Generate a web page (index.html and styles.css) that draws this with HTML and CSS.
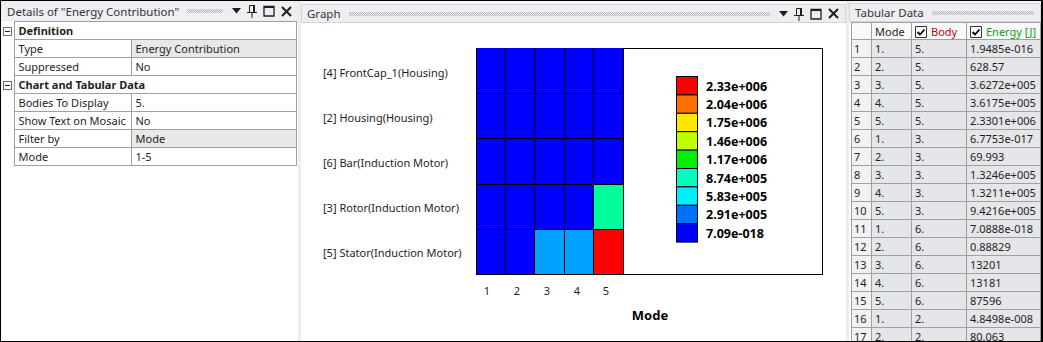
FILE: index.html
```html
<!DOCTYPE html>
<html lang="en">
<head>
  <meta charset="UTF-8">
  <title>Energy Contribution</title>
  <link rel="stylesheet" href="styles.css">
</head>
<body>
  <div class="frame">
    <!-- details pane -->
    <section class="panel details">
      <header class="panel-head">
        <span class="title">Details of "Energy Contribution"</span>
        <span class="grip"></span>
        <span class="head-icons">
          <svg width="9" height="6" viewBox="0 0 9 6"><path d="M0 0h9L4.5 5.5z" fill="#1e1e1e"/></svg>
          <svg width="10" height="14" viewBox="0 0 10 14"><path d="M2.5 1.5h5v7h-5z M0 8.5h10 M5 9v5" stroke="#1e1e1e" fill="none"/><path d="M6 1h2v8H6z" fill="#1e1e1e"/></svg>
          <svg width="12" height="12" viewBox="0 0 12 12"><path d="M1 1.5h10v9.5H1z" stroke="#1e1e1e" stroke-width="1.3" fill="none"/><path d="M1 1h10v2H1z" fill="#1e1e1e"/></svg>
          <svg width="11" height="11" viewBox="0 0 11 11"><path d="M1 1l9 9M10 1l-9 9" stroke="#1e1e1e" stroke-width="2"/></svg>
        </span>
      </header>
      <table class="props">
        <colgroup><col class="c-gutter"><col class="c-label"><col class="c-value"></colgroup>
        <tr class="group"><td class="gutter"><span class="minus"></span></td><td colspan="2">Definition</td></tr>
        <tr><td class="gutter"></td><td>Type</td><td class="ro">Energy Contribution</td></tr>
        <tr><td class="gutter"></td><td>Suppressed</td><td>No</td></tr>
        <tr class="group"><td class="gutter"><span class="minus"></span></td><td colspan="2">Chart and Tabular Data</td></tr>
        <tr><td class="gutter"></td><td>Bodies To Display</td><td>5.</td></tr>
        <tr><td class="gutter"></td><td>Show Text on Mosaic</td><td>No</td></tr>
        <tr><td class="gutter"></td><td>Filter by</td><td class="ro">Mode</td></tr>
        <tr><td class="gutter"></td><td>Mode</td><td>1-5</td></tr>
      </table>
    </section>

    <!-- graph pane -->
    <section class="panel graph">
      <header class="panel-head">
        <span class="title">Graph</span>
        <span class="grip"></span>
        <span class="head-icons">
          <svg width="9" height="6" viewBox="0 0 9 6"><path d="M0 0h9L4.5 5.5z" fill="#1e1e1e"/></svg>
          <svg width="10" height="14" viewBox="0 0 10 14"><path d="M2.5 1.5h5v7h-5z M0 8.5h10 M5 9v5" stroke="#1e1e1e" fill="none"/><path d="M6 1h2v8H6z" fill="#1e1e1e"/></svg>
          <svg width="12" height="12" viewBox="0 0 12 12"><path d="M1 1.5h10v9.5H1z" stroke="#1e1e1e" stroke-width="1.3" fill="none"/><path d="M1 1h10v2H1z" fill="#1e1e1e"/></svg>
          <svg width="11" height="11" viewBox="0 0 11 11"><path d="M1 1l9 9M10 1l-9 9" stroke="#1e1e1e" stroke-width="2"/></svg>
        </span>
      </header>
      <div class="graph-body">
        <svg class="chart" width="545" height="317" viewBox="301 23 545 317">
          <g class="bodies">
            <text x="323" y="77">[4] FrontCap_1(Housing)</text>
            <text x="323" y="122">[2] Housing(Housing)</text>
            <text x="323" y="167">[6] Bar(Induction Motor)</text>
            <text x="323" y="212">[3] Rotor(Induction Motor)</text>
            <text x="323" y="257">[5] Stator(Induction Motor)</text>
          </g>
          <rect x="476.5" y="48.5" width="346" height="226" fill="#fff" stroke="#000"/>
          <!-- mosaic -->
          <rect x="476" y="48" width="147" height="181" fill="#0000ff"/>
          <rect x="594" y="184" width="29" height="45" fill="#00ff9c"/>
          <rect x="476" y="229" width="58" height="45" fill="#0000ff"/>
          <rect x="534" y="229" width="59" height="45" fill="#00a2ff"/>
          <rect x="593" y="229" width="30" height="45" fill="#ff0000"/>
          <g stroke="#000" stroke-width="1">
            <path d="M476 93.5h147M476 138.5h147M476 184.5h147M476 229.5h147M476 274.5h147"/>
            <path d="M476.5 48v227M505.5 48v227M534.5 48v227M564.5 48v227M593.5 48v227M623.5 48v227"/>
          </g>
          <!-- legend -->
          <g stroke="#000" stroke-width="1">
            <rect x="676.5" y="76.5" width="21" height="18.4" fill="#ff0000"/>
            <rect x="676.5" y="94.9" width="21" height="18.4" fill="#ff7000"/>
            <rect x="676.5" y="113.3" width="21" height="18.4" fill="#ffe600"/>
            <rect x="676.5" y="131.7" width="21" height="18.4" fill="#c0ff00"/>
            <rect x="676.5" y="150.1" width="21" height="18.4" fill="#00ee00"/>
            <rect x="676.5" y="168.5" width="21" height="18.4" fill="#00ffbf"/>
            <rect x="676.5" y="186.9" width="21" height="18.4" fill="#00eeff"/>
            <rect x="676.5" y="205.3" width="21" height="18.4" fill="#0070ff"/>
            <rect x="676.5" y="223.7" width="21" height="18.4" fill="#0000ff"/>
          </g>
          <g class="legend">
            <text x="706" y="90.5">2.33e+006</text>
            <text x="706" y="108.9">2.04e+006</text>
            <text x="706" y="127.3">1.75e+006</text>
            <text x="706" y="145.7">1.46e+006</text>
            <text x="706" y="164.1">1.17e+006</text>
            <text x="706" y="182.5">8.74e+005</text>
            <text x="706" y="200.9">5.83e+005</text>
            <text x="706" y="219.3">2.91e+005</text>
            <text x="706" y="237.7">7.09e-018</text>
          </g>
          <g class="ticks">
            <text x="487" y="295">1</text>
            <text x="517" y="295">2</text>
            <text x="547" y="295">3</text>
            <text x="577" y="295">4</text>
            <text x="606" y="295">5</text>
          </g>
          <text class="axis" x="650" y="320">Mode</text>
        </svg>
      </div>
    </section>

    <!-- tabular pane -->
    <section class="panel tabular">
      <header class="panel-head">
        <span class="title">Tabular Data</span>
        <span class="grip"></span>
      </header>
      <div class="tab-body">
        <table class="grid">
          <colgroup><col class="c-num"><col class="c-mode"><col class="c-body"><col class="c-energy"></colgroup>
          <tr class="head">
            <td class="num"></td>
            <td>Mode</td>
            <td><span class="check"><svg width="12" height="12" viewBox="0 0 12 12"><path d="M0.5 0.5h11v11h-11z" fill="#fff" stroke="#333"/><path d="M2.5 6l2.5 2.5 4.5-5" stroke="#000" stroke-width="1.8" fill="none"/></svg></span><span class="body-col">Body</span></td>
            <td><span class="check"><svg width="12" height="12" viewBox="0 0 12 12"><path d="M0.5 0.5h11v11h-11z" fill="#fff" stroke="#333"/><path d="M2.5 6l2.5 2.5 4.5-5" stroke="#000" stroke-width="1.8" fill="none"/></svg></span><span class="energy-col">Energy [J]</span></td>
          </tr>
          <tr><td class="num">1</td><td>1.</td><td>5.</td><td>1.9485e-016</td></tr>
          <tr><td class="num">2</td><td>2.</td><td>5.</td><td>628.57</td></tr>
          <tr><td class="num">3</td><td>3.</td><td>5.</td><td>3.6272e+005</td></tr>
          <tr><td class="num">4</td><td>4.</td><td>5.</td><td>3.6175e+005</td></tr>
          <tr><td class="num">5</td><td>5.</td><td>5.</td><td>2.3301e+006</td></tr>
          <tr><td class="num">6</td><td>1.</td><td>3.</td><td>6.7753e-017</td></tr>
          <tr><td class="num">7</td><td>2.</td><td>3.</td><td>69.993</td></tr>
          <tr><td class="num">8</td><td>3.</td><td>3.</td><td>1.3246e+005</td></tr>
          <tr><td class="num">9</td><td>4.</td><td>3.</td><td>1.3211e+005</td></tr>
          <tr><td class="num">10</td><td>5.</td><td>3.</td><td>9.4216e+005</td></tr>
          <tr><td class="num">11</td><td>1.</td><td>6.</td><td>7.0888e-018</td></tr>
          <tr><td class="num">12</td><td>2.</td><td>6.</td><td>0.88829</td></tr>
          <tr><td class="num">13</td><td>3.</td><td>6.</td><td>13201</td></tr>
          <tr><td class="num">14</td><td>4.</td><td>6.</td><td>13181</td></tr>
          <tr><td class="num">15</td><td>5.</td><td>6.</td><td>87596</td></tr>
          <tr><td class="num">16</td><td>1.</td><td>2.</td><td>4.8498e-008</td></tr>
          <tr><td class="num">17</td><td>2.</td><td>2.</td><td>80.063</td></tr>
          <tr><td class="num">18</td><td>3.</td><td>2.</td><td>85807</td></tr>
        </table>
      </div>
    </section>
  </div>
</body>
</html>
```

FILE: styles.css
```css
* { box-sizing: border-box; }
body {
  margin: 0;
  font-family: "Segoe UI", "Noto Sans", sans-serif;
  font-size: 11px;
  color: #1e1e1e;
  background: #fff;
}
.frame {
  width: 1043px;
  height: 342px;
  display: flex;
  gap: 3px;
  border: solid #000;
  border-width: 1px 2px 1px 1px;
  background: #ececec;
  overflow: hidden;
}
.panel {
  display: flex;
  flex-direction: column;
  min-width: 0;
}
.details {
  width: 297px;
  background: #fff;
}
.graph {
  width: 545px;
  padding-top: 3px;
  background: #f6f6f6;
}
.tabular {
  flex: 1;
  padding-top: 2px;
  background: #f6f6f6;
}
.panel-head {
  display: flex;
  align-items: center;
  gap: 5px;
  height: 19px;
  flex: none;
  padding: 0 6px 0 5px;
  background: #eeeef2;
  border: 1px solid #d4d5dc;
}
.details .panel-head {
  height: 20px;
  border: none;
  padding-left: 6px;
}
.panel-head .title {
  font-size: 11.5px;
  color: #333;
  white-space: nowrap;
}
.grip {
  flex: 1;
  height: 4px;
  margin-left: 3px;
  background: repeating-conic-gradient(#b4b4bc 0 25%, transparent 0 50%) 0 0 / 2px 2px;
}
.head-icons {
  display: flex;
  align-items: center;
  gap: 6px;
  margin-left: 4px;
}
.head-icons svg { display: block; }

/* property grid */
.props {
  border-collapse: collapse;
  width: 296px;
  table-layout: fixed;
}
.props .c-gutter { width: 13px; }
.props .c-label { width: 117px; }
.props td {
  height: 18px;
  padding: 0 4px;
  border: 1px solid #a0a0a0;
  white-space: nowrap;
  overflow: hidden;
}
.props td.gutter {
  padding: 0;
  border: none;
  vertical-align: middle;
}
.props td.ro { background: #e8e8e6; }
.props .group td { font-weight: bold; }
.minus {
  display: block;
  width: 9px;
  height: 9px;
  margin: 1px 0 0 2px;
  border: 1px solid #707070;
  background: linear-gradient(#222, #222) center / 5px 1px no-repeat #fff;
}

/* graph */
.graph-body {
  flex: 1;
  background: #fff;
}
.chart { display: block; }
.chart text {
  font-family: "Segoe UI", "Noto Sans", sans-serif;
  font-size: 11px;
  fill: #1e1e1e;
}
.chart .legend text {
  font-weight: bold;
  font-size: 12.5px;
  fill: #000;
}
.chart .ticks text {
  font-size: 11px;
  text-anchor: middle;
}
.chart text.axis {
  font-weight: bold;
  font-size: 13px;
  text-anchor: middle;
  fill: #000;
}

/* tabular data */
.tab-body {
  flex: 1;
  padding-left: 2px;
  background: #fff;
  overflow: hidden;
}
.grid {
  border-collapse: collapse;
  table-layout: fixed;
  width: 190px;
}
.grid .c-num { width: 20px; }
.grid .c-mode { width: 40px; }
.grid .c-body { width: 55px; }
.grid td {
  height: 18px;
  padding: 0 3px;
  border: 1px solid #a0a0a0;
  background: #e4e6e9;
  white-space: nowrap;
  overflow: hidden;
}
.grid td.num {
  padding: 0 2px;
  background: #f2f2f2;
}
.grid .head td {
  height: 17px;
  background: #f9f9f9;
}
.check {
  display: inline-block;
  vertical-align: -2px;
  margin-right: 4px;
}
.check svg { display: block; }
.body-col { color: #c80000; }
.energy-col { color: #139a13; }
```
